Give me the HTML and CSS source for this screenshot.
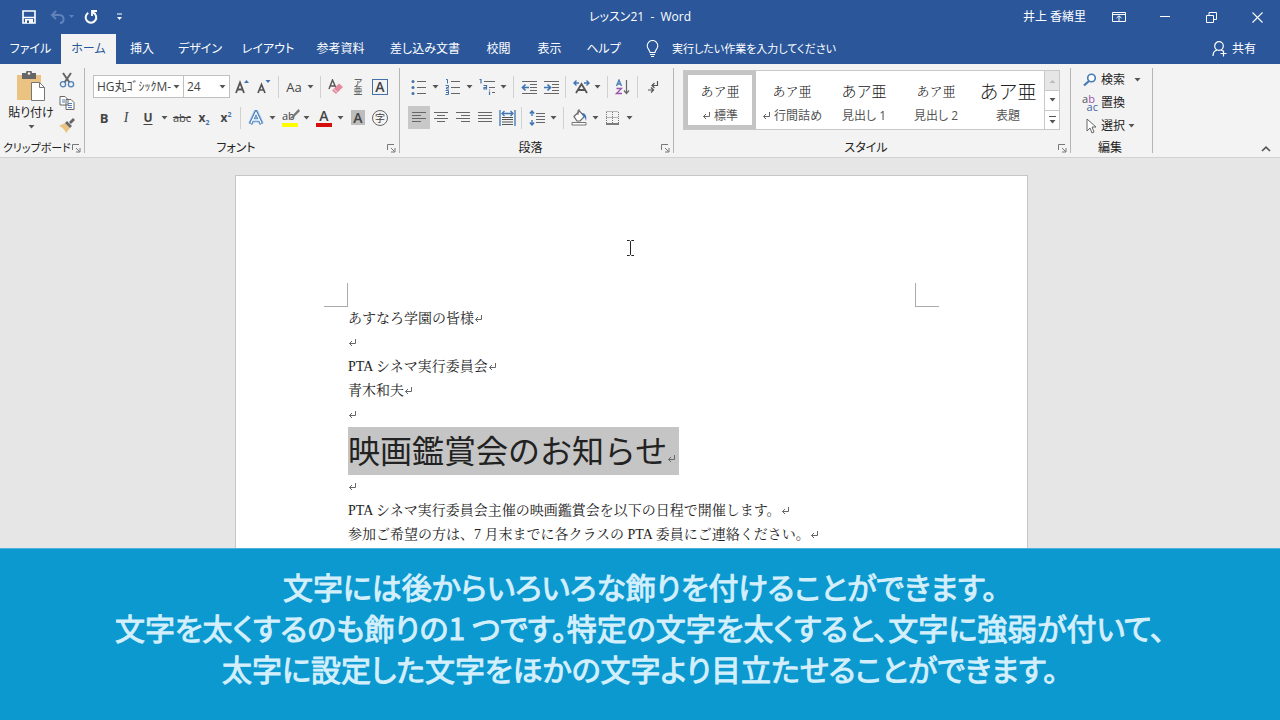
FILE: index.html
```html
<!DOCTYPE html>
<html lang="ja">
<head>
<meta charset="utf-8">
<meta name="viewport" content="width=device-width, initial-scale=1">
<title>レッスン21 - Word</title>
<link rel="stylesheet" href="styles.css">
</head>
<body>
<svg class="defs" aria-hidden="true">
  <symbol id="down" viewBox="0 0 7 4"><path d="M0.5 0h6L3.5 3.5z" fill="currentColor"/></symbol>
  <symbol id="launch" viewBox="0 0 9 9"><path d="M.5 6V.5H7M4 4l3.5 3.5M8 4v4H4" fill="none" stroke="#777"/></symbol>
  <symbol id="ret" viewBox="0 0 9 9"><path d="M7.500 1v4.500H1.500M4 3L1.500 5.500 4 8" fill="none" stroke="#666"/></symbol>
</svg>

<header class="titlebar">
  <div class="quick">
    <button class="quick-btn quick-save" aria-label="上書き保存"><svg width="14" height="14" viewBox="0 0 14 14"><path d="M1 1h12v12H1zM1 7.500h12" fill="none" stroke="#fff" stroke-width="1.600"/><path d="M3 9h8v4H3z" fill="#fff"/><path d="M5 10.500h2V13H5z" fill="#2b579a"/></svg></button>
    <button class="quick-btn quick-undo" aria-label="元に戻す"><svg width="24" height="14" viewBox="0 0 24 14"><path d="M6 1L2 5l4 4M2 5h7c6 0 6 8 1 8" fill="none" stroke="currentColor" stroke-width="2"/><path d="M19 5h5l-2.500 3z" fill="currentColor"/></svg></button>
    <button class="quick-btn" aria-label="繰り返し"><svg width="14" height="14" viewBox="0 0 14 14"><path d="M9 2.500A5.300 5.300 0 1 1 4.300 2.800" fill="none" stroke="#fff" stroke-width="2"/><path d="M8 6V1h5" fill="none" stroke="#fff" stroke-width="1.800"/></svg></button>
    <button class="quick-btn quick-more" aria-label="クイック アクセス ツール バーのカスタマイズ"><svg width="7" height="8" viewBox="0 0 7 8"><path d="M1 1h5" stroke="#fff"/><path d="M1 4h5L3.500 7z" fill="#fff"/></svg></button>
  </div>
  <h1 class="title">レッスン21 &nbsp;- &nbsp;Word</h1>
  <div class="window-controls">
    <span class="user">井上 香緒里</span>
    <button class="win-btn" aria-label="リボンの表示オプション"><svg width="14" height="12" viewBox="0 0 14 12"><path d="M.5 1.500h13v9H.5zM.5 3.500h13M7 10V5M4.500 7L7 4.800 9.500 7" fill="none" stroke="#fff"/></svg></button>
    <button class="win-btn" aria-label="最小化"><svg width="10" height="10" viewBox="0 0 10 10"><path d="M0 4.500h10" stroke="#fff"/></svg></button>
    <button class="win-btn" aria-label="元に戻す (縮小)"><svg width="11" height="11" viewBox="0 0 11 11"><path d="M.5 3.500h7v7h-7zM3 3.500v-3h7.500v7H8" fill="none" stroke="#fff"/></svg></button>
    <button class="win-btn" aria-label="閉じる"><svg width="11" height="11" viewBox="0 0 11 11"><path d="M.5.5l10 10M10.500.5l-10 10" stroke="#fff" stroke-width="1.100"/></svg></button>
  </div>
</header>

<nav class="tabbar">
  <div class="tabs">
    <button class="tab">ファイル</button>
    <button class="tab tab-active">ホーム</button>
    <button class="tab">挿入</button>
    <button class="tab">デザイン</button>
    <button class="tab">レイアウト</button>
    <button class="tab">参考資料</button>
    <button class="tab">差し込み文書</button>
    <button class="tab">校閲</button>
    <button class="tab">表示</button>
    <button class="tab">ヘルプ</button>
  </div>
  <label class="tell"><svg width="13" height="18" viewBox="0 0 13 18"><path d="M4 12.500C4 10 1.200 9 1.200 5.800a5.300 5.300 0 0 1 10.600 0C11.800 9 9 10 9 12.500zM4 14.500h5M5 16.500h3" fill="none" stroke="#fff" stroke-width="1.100"/></svg><input class="tell-input" aria-label="操作アシスト" placeholder="実行したい作業を入力してください"></label>
  <button class="share"><svg width="16" height="16" viewBox="0 0 16 16"><circle cx="7" cy="5" r="4.300" fill="none" stroke="#fff" stroke-width="1.200"/><path d="M1 15c0-4 2-5.500 4-6M9 9c1 .3 1.500.7 2 1.200M11.500 9.500v6M8.500 12.500h6" fill="none" stroke="#fff" stroke-width="1.200"/></svg>共有</button>
</nav>

<section class="ribbon">
  <div class="group group-clip">
    <div class="clip-body">
      <button class="paste"><svg width="30" height="31" viewBox="0 0 30 31"><path d="M1 4h24v25H1z" fill="#eac282"/><path d="M6 2h4a3 3 0 0 1 6 0h4v6H6z" fill="#666"/><circle cx="13" cy="2.500" r="1.300" fill="#f3f3f3"/><path d="M15.500 11.500h8l5 5v13h-13z" fill="#fff" stroke="#777"/><path d="M23.500 11.500v5h5" fill="none" stroke="#777"/></svg><span class="paste-label">貼り付け</span><svg class="arrow"><use href="#down"/></svg></button>
      <div class="clip-tools">
        <button class="tool" aria-label="切り取り"><svg width="16" height="16" viewBox="0 0 16 16"><path d="M4 1l6.500 9.500M12 1L5.500 10.500" stroke="#666" stroke-width="2"/><circle cx="4" cy="12.300" r="2.600" fill="none" stroke="#5080b8" stroke-width="1.300"/><circle cx="12" cy="12.300" r="2.600" fill="none" stroke="#5080b8" stroke-width="1.300"/></svg></button>
        <button class="tool" aria-label="コピー"><svg width="16" height="16" viewBox="0 0 16 16"><path d="M1 1.500h5l3 3V10H1zM7 4.500h5l3 3v7H7z" fill="#fff" stroke="#666"/><path d="M3 5h3M3 7h3M9 8.500h4M9 10.500h4M9 12.500h4" stroke="#5080b8"/></svg></button>
        <button class="tool" aria-label="書式のコピー/貼り付け"><svg width="16" height="15" viewBox="0 0 16 15"><path d="M0 8l6-3 5 5-4 5C6 12 3 9 0 8z" fill="#eac282"/><path d="M6 5l2-2 5 5-2 2zM10 4l4-4 2 2-4 4z" fill="#666"/></svg></button>
      </div>
    </div>
    <div class="group-foot"><span class="foot-small">クリップボード</span><button class="launch" aria-label="クリップボードの設定"><svg class="launch-icon"><use href="#launch"/></svg></button></div>
  </div>

  <div class="group group-font">
    <div class="rows">
      <div class="row">
        <label class="combo combo-font"><select class="combo-select" aria-label="フォント"><option>HG丸ｺﾞｼｯｸM-</option></select><svg class="arrow"><use href="#down"/></svg></label>
        <label class="combo combo-size"><select class="combo-select" aria-label="フォント サイズ"><option>24</option></select><svg class="arrow"><use href="#down"/></svg></label>
        <button class="tool" aria-label="フォント サイズの拡大"><svg width="16" height="16" viewBox="0 0 16 16"><path d="M2 14L6 3.500 10 14M3.500 10.500h5" fill="none" stroke="#555" stroke-width="1.800"/><path d="M10 4h5L12.500 1z" fill="#4472a8"/></svg></button>
        <button class="tool" aria-label="フォント サイズの縮小"><svg width="16" height="16" viewBox="0 0 16 16"><path d="M2 14l3.500-8.500L9 14M3.500 11h4" fill="none" stroke="#555" stroke-width="1.700"/><path d="M9.500 1h5L12 4z" fill="#4472a8"/></svg></button>
        <i class="sep"></i>
        <button class="tool tool-case">Aa</button><button class="drop" aria-label="文字種の変換"><svg class="arrow"><use href="#down"/></svg></button>
        <i class="sep"></i>
        <button class="tool" aria-label="すべての書式をクリア"><svg width="16" height="16" viewBox="0 0 16 16"><path d="M1 10l3.500-9L8 9M2.500 7h4" fill="none" stroke="#555" stroke-width="1.400"/><path d="M11 4.500L15 8l-7 7-4-3.500z" fill="#e48aa0"/><path d="M5.500 10l4 3.500" stroke="#f9dbe2"/></svg></button>
        <button class="tool tool-ruby" aria-label="ルビ">ア<br>亜</button>
        <button class="tool" aria-label="囲み線"><span class="boxed">A</span></button>
      </div>
      <div class="row">
        <button class="tool tool-bold">B</button><button class="tool tool-italic">I</button><button class="tool tool-under">U</button><button class="drop" aria-label="下線の種類"><svg class="arrow"><use href="#down"/></svg></button>
        <button class="tool tool-strike">abc</button><button class="tool tool-script">x<sub>2</sub></button><button class="tool tool-script">x<sup>2</sup></button>
        <i class="sep"></i>
        <button class="tool" aria-label="文字の効果と体裁"><svg width="16" height="16" viewBox="0 0 16 16"><path d="M2.500 14L8 2l5.500 12M5 10h6" fill="none" stroke="#a9cbed" stroke-width="5"/><path d="M2.500 14L8 2l5.500 12M5 10h6" fill="none" stroke="#4779b5" stroke-width="3.200"/><path d="M2.800 13.500L8 2.500l5.200 11M5 10h6" fill="none" stroke="#fff" stroke-width="1.300"/></svg></button><button class="drop" aria-label="効果の一覧"><svg class="arrow"><use href="#down"/></svg></button>
        <button class="tool tool-color"><span class="mark-text">ab</span><svg class="pen" width="16" height="16" viewBox="0 0 16 16"><path d="M14.500 1L8 8l-3 3 4-1 7-7z" fill="#777"/></svg><span class="swatch swatch-yellow"></span></button><button class="drop" aria-label="蛍光ペンの色"><svg class="arrow"><use href="#down"/></svg></button>
        <button class="tool tool-color"><span class="mark-letter">A</span><span class="swatch swatch-red"></span></button><button class="drop" aria-label="フォントの色"><svg class="arrow"><use href="#down"/></svg></button>
        <button class="tool" aria-label="文字の網かけ"><span class="shaded">A</span></button>
        <button class="tool" aria-label="囲い文字"><span class="circled">字</span></button>
      </div>
    </div>
    <div class="group-foot"><span>フォント</span><button class="launch" aria-label="フォントの設定"><svg class="launch-icon"><use href="#launch"/></svg></button></div>
  </div>

  <div class="group group-para">
    <div class="rows">
      <div class="row">
        <button class="tool" aria-label="箇条書き"><svg width="16" height="16" viewBox="0 0 16 16"><path d="M6 2.500h9M6 8.500h9M6 14.500h9" stroke="#666"/><g fill="#4472a8"><circle cx="2" cy="2.500" r="1.500"/><circle cx="2" cy="8.500" r="1.500"/><circle cx="2" cy="14.500" r="1.500"/></g></svg></button><button class="drop" aria-label="行頭文字"><svg class="arrow"><use href="#down"/></svg></button>
        <button class="tool" aria-label="段落番号"><svg width="16" height="16" viewBox="0 0 16 16"><path d="M6 2.500h9M6 8.500h9M6 14.500h9" stroke="#666"/><path d="M1 .5h1.500V4.500M.5 6.500h3v2h-2v1.500h2.500M.5 11.500h3v4h-3M1 13.500h2" fill="none" stroke="#4472a8"/></svg></button><button class="drop" aria-label="番号の書式"><svg class="arrow"><use href="#down"/></svg></button>
        <button class="tool" aria-label="アウトライン"><svg width="16" height="16" viewBox="0 0 16 16"><path d="M5 2.500h11M10 8.500h6M13 13.500h3" stroke="#666"/><path d="M.5.500H2V4.500M4.500 6.500h3V10H5V8.500H7M10.500 12.500V16M10.500 10.500v1" fill="none" stroke="#4472a8" stroke-width="1.200"/></svg></button><button class="drop" aria-label="リスト ライブラリ"><svg class="arrow"><use href="#down"/></svg></button>
        <i class="sep"></i>
        <button class="tool" aria-label="インデントを減らす"><svg width="17" height="16" viewBox="0 0 17 16"><path d="M1 2.500h15M9 5.500h7M9 8.500h7M9 11.500h7M1 14.500h15" stroke="#666"/><path d="M8 8.500H2M4.500 5.500L1.500 8.500l3 3" fill="none" stroke="#3e75b5" stroke-width="1.700"/></svg></button>
        <button class="tool" aria-label="インデントを増やす"><svg width="17" height="16" viewBox="0 0 17 16"><path d="M1 2.500h15M9 5.500h7M9 8.500h7M9 11.500h7M1 14.500h15" stroke="#666"/><path d="M1 8.500h6M4.500 5.500l3 3-3 3" fill="none" stroke="#3e75b5" stroke-width="1.700"/></svg></button>
        <i class="sep"></i>
        <button class="tool" aria-label="拡張書式"><svg width="17" height="16" viewBox="0 0 17 16"><path d="M3 14l5.500-9L14 14M5 11h7" fill="none" stroke="#555" stroke-width="1.800"/><path d="M1.500 4H6M3.500 1.500L1 4l2.500 2.500M15.500 4H11M13.500 1.500L16 4l-2.500 2.500" fill="none" stroke="#3e75b5" stroke-width="1.400"/></svg></button><button class="drop" aria-label="拡張書式の一覧"><svg class="arrow"><use href="#down"/></svg></button>
        <i class="sep"></i>
        <button class="tool" aria-label="並べ替え"><svg width="16" height="16" viewBox="0 0 16 16"><path d="M1.500 7L4 1l2.500 6M2.500 5h3" fill="none" stroke="#4779b5" stroke-width="1.300"/><path d="M1.500 9.500h5l-5 5h5.500" fill="none" stroke="#9a55b0" stroke-width="1.300"/><path d="M11.500 1v13M9 11.500l2.500 3 2.500-3" fill="none" stroke="#666" stroke-width="1.200"/></svg></button>
        <i class="sep"></i>
        <button class="tool" aria-label="編集記号の表示/非表示"><svg width="12" height="14" viewBox="0 0 12 14"><path d="M10.500 1v4.500H5M7.500 3L5 5.500 7.500 8M1 10h5M4 7.500L6.500 10 4 12.500" fill="none" stroke="#555" stroke-width="1.200"/></svg></button>
      </div>
      <div class="row">
        <button class="tool tool-on" aria-label="左揃え"><svg width="16" height="14" viewBox="0 0 16 14"><path d="M1 1.500h14M1 4.500h9M1 7.500h14M1 10.500h9" stroke="#666"/></svg></button>
        <button class="tool" aria-label="中央揃え"><svg width="16" height="14" viewBox="0 0 16 14"><path d="M1 1.500h14M4 4.500h8M1 7.500h14M4 10.500h8" stroke="#666"/></svg></button>
        <button class="tool" aria-label="右揃え"><svg width="16" height="14" viewBox="0 0 16 14"><path d="M1 1.500h14M6 4.500h9M1 7.500h14M6 10.500h9" stroke="#666"/></svg></button>
        <button class="tool" aria-label="両端揃え"><svg width="16" height="14" viewBox="0 0 16 14"><path d="M1 1.500h14M1 4.500h14M1 7.500h14M1 10.500h14" stroke="#666"/></svg></button>
        <button class="tool" aria-label="均等割り付け"><svg width="17" height="16" viewBox="0 0 17 16"><path d="M3 7.500h11M3 9.500h11M3 12h11M3 14.500h11" stroke="#555"/><path d="M1 0v16M16 0v16M3 3.500h11M5.500 1L3 3.500 5.500 6M11.500 1L14 3.500 11.500 6" fill="none" stroke="#3e75b5" stroke-width="1.300"/></svg></button>
        <i class="sep"></i>
        <button class="tool" aria-label="行と段落の間隔"><svg width="16" height="16" viewBox="0 0 16 16"><path d="M7 3.500h9M7 6.500h9M7 9.500h9M7 12.500h9" stroke="#666"/><path d="M3 1v5M3 10v5M.8 3.500L3 1l2.200 2.500M.8 12.500L3 15l2.200-2.500" fill="none" stroke="#3e75b5" stroke-width="1.400"/></svg></button><button class="drop" aria-label="間隔の一覧"><svg class="arrow"><use href="#down"/></svg></button>
        <i class="sep"></i>
        <button class="tool" aria-label="塗りつぶし"><svg width="17" height="17" viewBox="0 0 17 17"><path d="M3 7.500L8.500 2l5 5.500L9 12H6z" fill="#fff" stroke="#666" stroke-width="1.200"/><path d="M7 6V1h2" fill="none" stroke="#666"/><path d="M11 4c4 0 5 4 4 8-1-3-1-4-3-5z" fill="#3e75b5"/><path d="M1 13.500h14v2.500H1z" fill="#fff" stroke="#777"/></svg></button><button class="drop" aria-label="塗りつぶしの色"><svg class="arrow"><use href="#down"/></svg></button>
        <button class="tool" aria-label="罫線"><svg width="14" height="14" viewBox="0 0 14 14"><path d="M.5 12V.5M6.500 12V.5M12.500 12V.5M.5.5h12M.5 6.500h12" stroke="#777" stroke-dasharray="1 1" fill="none"/><path d="M0 13h13" stroke="#555" stroke-width="1.500"/></svg></button><button class="drop" aria-label="罫線の種類"><svg class="arrow"><use href="#down"/></svg></button>
      </div>
    </div>
    <div class="group-foot"><span>段落</span><button class="launch" aria-label="段落の設定"><svg class="launch-icon"><use href="#launch"/></svg></button></div>
  </div>

  <div class="group group-styles">
    <div class="gallery">
      <button class="style style-on"><span class="sample">あア亜</span><span class="style-name"><svg class="ret"><use href="#ret"/></svg> 標準</span></button>
      <button class="style"><span class="sample">あア亜</span><span class="style-name"><svg class="ret"><use href="#ret"/></svg> 行間詰め</span></button>
      <button class="style"><span class="sample sample-mid">あア亜</span><span class="style-name">見出し 1</span></button>
      <button class="style"><span class="sample">あア亜</span><span class="style-name">見出し 2</span></button>
      <button class="style"><span class="sample sample-big">あア亜</span><span class="style-name">表題</span></button>
      <div class="gallery-nav">
        <button class="nav-btn nav-off" aria-label="前の行"><svg width="7" height="4" viewBox="0 0 7 4"><path d="M.5 4h6l-3-3z" fill="#bbb"/></svg></button>
        <button class="nav-btn" aria-label="次の行"><svg class="arrow"><use href="#down"/></svg></button>
        <button class="nav-btn" aria-label="その他"><svg width="7" height="8" viewBox="0 0 7 8"><path d="M0 .5h7" stroke="#555"/><path d="M.5 4h6l-3 3.500z" fill="#555"/></svg></button>
      </div>
    </div>
    <div class="group-foot"><span>スタイル</span><button class="launch" aria-label="スタイルの設定"><svg class="launch-icon"><use href="#launch"/></svg></button></div>
  </div>

  <div class="group group-edit">
    <div class="edit-list">
      <button class="edit"><svg width="16" height="16" viewBox="0 0 16 16"><circle cx="9.500" cy="6" r="3.800" fill="#fff" stroke="#4779b5" stroke-width="1.600"/><path d="M7 9l-5 4.500" stroke="#4779b5" stroke-width="2.200"/></svg>検索<svg class="arrow arrow-far"><use href="#down"/></svg></button>
      <button class="edit"><span class="replace" aria-hidden="true"><span>a<b>b</b></span><span class="replace-to">ac</span></span>置換</button>
      <button class="edit"><svg width="16" height="16" viewBox="0 0 16 16"><path d="M5 1v12l3-3 2 5 2-1-2-5h4z" fill="#fff" stroke="#666"/></svg>選択<svg class="arrow"><use href="#down"/></svg></button>
    </div>
    <div class="group-foot"><span>編集</span></div>
  </div>
  <button class="collapse" aria-label="リボンを折りたたむ"><svg width="10" height="6" viewBox="0 0 10 6"><path d="M1 5l4-3.800L9 5" fill="none" stroke="#555" stroke-width="1.700"/></svg></button>
</section>

<main class="workspace">
  <article class="page">
    <div class="marks"><i class="mark mark-left"></i><i class="mark mark-right"></i></div>
    <div class="text">
      <p>あすなろ学園の皆様<svg class="ret"><use href="#ret"/></svg></p>
      <p><svg class="ret"><use href="#ret"/></svg></p>
      <p>PTA シネマ実行委員会<svg class="ret"><use href="#ret"/></svg></p>
      <p>青木和夫<svg class="ret"><use href="#ret"/></svg></p>
      <p><svg class="ret"><use href="#ret"/></svg></p>
      <h2 class="headline">映画鑑賞会のお知らせ<svg class="ret"><use href="#ret"/></svg></h2>
      <p><svg class="ret"><use href="#ret"/></svg></p>
      <p>PTA シネマ実行委員会主催の映画鑑賞会を以下の日程で開催します。<svg class="ret"><use href="#ret"/></svg></p>
      <p>参加ご希望の方は、7 月末までに各クラスの PTA 委員にご連絡ください。<svg class="ret"><use href="#ret"/></svg></p>
    </div>
    <svg class="ibeam" width="9" height="16" viewBox="0 0 9 16"><path d="M1 .5h2.500l1 1 1-1H8M4.500 1.500v13M1 15.500h2.500l1-1 1 1H8" fill="none" stroke="#222"/></svg>
  </article>
</main>

<footer class="caption">
  <p>文字には後からいろいろな飾りを付けることができます。</p>
  <p>文字を太くするのも飾りの1 つです。特定の文字を太くすると、文字に強弱が付いて、</p>
  <p>太字に設定した文字をほかの文字より目立たせることができます。</p>
</footer>
</body>
</html>
```
FILE: styles.css
```css
* { box-sizing: border-box; }

body {
  margin: 0;
  height: 100vh;
  display: flex;
  flex-direction: column;
  overflow: hidden;
  font: 12px/16px "Open Sans", "Noto Sans CJK JP", sans-serif;
  font-feature-settings: "palt";
  color: #333;
  background: #e6e6e6;
}

button, input, select {
  font: inherit;
  font-feature-settings: inherit;
  color: inherit;
  margin: 0;
  padding: 0;
  border: 0;
  background: none;
  white-space: nowrap;
}

button { display: flex; align-items: center; justify-content: center; }
svg { flex: none; }
p, h1, h2 { margin: 0; font-weight: 400; }

.defs { display: none; }
.arrow { width: 7px; height: 4px; color: #555; }
.ret { width: 9px; height: 9px; }

/* Title bar */
.titlebar {
  flex: none;
  height: 34px;
  display: grid;
  grid-template-columns: 1fr auto 1fr;
  align-items: center;
  color: #fff;
  background: #2b579a;
}
.quick { display: flex; gap: 10px; padding: 0 22px; }
.quick-save { margin-right: 4px; }
.quick-undo { color: #5f83ba; }
.quick-more { padding-left: 8px; }
.title { font-size: 12px; line-height: 32px; }
.window-controls { display: flex; justify-content: flex-end; align-items: center; height: 32px; }
.user { padding-right: 10px; }
.win-btn { width: 46px; height: 30px; }

/* Tabs */
.tabbar {
  flex: none;
  height: 30px;
  display: flex;
  align-items: center;
  color: #fff;
  background: #2b579a;
}
.tabs {
  height: 30px;
  display: grid;
  grid-template-columns: 61px 55px 52px 64px 72px 73px 96px 51px 51px 57px;
}
.tab { height: 30px; }
.tab-active { color: #2b579a; background: #f3f3f3; }
.tell { flex: 1; display: flex; align-items: center; gap: 13px; padding-left: 14px; }
.tell-input { flex: 1; outline: 0; font-size: 11px; }
.tell-input::placeholder { color: #fff; opacity: 1; }
.share { gap: 4px; padding: 0 24px; }

/* Ribbon */
.ribbon {
  flex: none;
  display: flex;
  height: 94px;
  background: #f3f3f3;
  border-bottom: 1px solid #d2d2d2;
}
.group {
  flex: none;
  display: flex;
  flex-direction: column;
  justify-content: space-between;
  margin: 4px 0;
  border-right: 1px solid #b5b5b5;
}
.group-clip { width: 85px; }
.group-font { width: 315px; }
.group-para { width: 274px; }
.group-styles { width: 397px; }
.group-edit { width: 82px; }
.group-foot { display: flex; align-items: center; padding: 0 3px 0 0; height: 10px; }
.group-foot span { flex: 1; text-align: center; white-space: nowrap; color: #222; }
.group-foot .foot-small { font-size: 11px; padding-left: 3px; text-align: left; }
.launch-icon { width: 9px; height: 9px; }

.clip-body { display: flex; gap: 2px; padding-left: 8px; }
.paste { width: 46px; flex-direction: column; justify-content: flex-start; padding-top: 3px; color: #222; }
.paste-label { padding: 3px 0 4px; }
.clip-tools { display: flex; flex-direction: column; }

.tool { flex: none; width: 22px; height: 23px; color: #444; }
.drop { flex: none; width: 12px; height: 22px; justify-content: flex-start; padding-left: 2px; }
.sep { flex: none; width: 8px; height: 22px; border-left: 1px solid #d0d0d0; margin-left: 3px; margin-right: -3px; }
.rows { display: flex; flex-direction: column; gap: 8px; padding: 7px 0 0 8px; }
.row { display: flex; align-items: center; height: 23px; }

.combo {
  display: flex;
  align-items: center;
  height: 23px;
  padding: 0 3px;
  background: #fff;
  border: 1px solid #c0c0c0;
}
.combo-select { flex: 1; min-width: 0; appearance: none; outline: 0; color: #444; }
.combo-font { width: 91px; }
.combo-size { width: 47px; margin: 0 1px 0 -1px; }

.tool-case { font-size: 13px; }
.tool-ruby { display: block; font-size: 9px; line-height: 8px; text-align: center; }
.boxed { width: 16px; border: 1px solid #4472a8; font-size: 14px; font-weight: 600; line-height: 14px; }
.shaded { width: 14px; background: #bdbdbd; font-size: 14px; font-weight: 600; line-height: 15px; }
.circled { width: 16px; border: 1px solid #666; border-radius: 8px; font-size: 10px; line-height: 14px; }
.tool-bold { font-weight: 700; font-size: 13px; }
.tool-italic { font: italic 14px "Liberation Serif", serif; }
.tool-under { font-weight: 700; text-decoration: underline; text-underline-offset: 2px; }
.tool-strike { font-size: 11px; text-decoration: line-through; }
.tool-script { display: block; font-weight: 700; font-size: 12px; line-height: 16px; text-align: center; }
.tool-script sub, .tool-script sup { font-size: 7px; line-height: 0; color: #4472a8; }
.tool-color { position: relative; flex-direction: column; }
.mark-text { align-self: flex-start; padding-left: 3px; font-size: 11px; line-height: 14px; }
.mark-letter { font-size: 14px; line-height: 14px; font-weight: 600; }
.pen { position: absolute; left: 5px; top: 2px; }
.swatch { width: 16px; height: 4px; }
.swatch-yellow { background: #ffff00; }
.swatch-red { background: #d40d0d; }
.tool-on { background: #c8c8c8; }

/* Style gallery */
.gallery {
  display: flex;
  height: 60px;
  margin: 2px 10px 0 9px;
  background: #fff;
  border: 1px solid #c8c8c8;
}
.style { flex: 1; flex-direction: column; justify-content: flex-start; padding-top: 7px; border: 4px solid transparent; }
.style-on { border-color: #c4c4c4; }
.sample { font: 300 13px/18px "Noto Serif CJK JP", "Noto Sans CJK JP", serif; font-feature-settings: normal; color: #222; }
.sample-mid { font: 300 15px/18px "Noto Sans CJK JP", sans-serif; }
.sample-big { font: 300 19px/18px "Noto Sans CJK JP", sans-serif; }
.style-name { line-height: 16px; padding-top: 8px; color: #555; }
.gallery-nav { flex: none; width: 15px; display: grid; grid-template-rows: 1fr 1fr 1fr; border-left: 1px solid #c8c8c8; }
.nav-btn + .nav-btn { border-top: 1px solid #c8c8c8; }
.nav-off { background: #e6e6e6; }

.edit-list { padding: 0 0 0 11px; }
.edit { height: 23px; gap: 3px; color: #222; }
.arrow-far { margin-left: 6px; }
.replace { width: 16px; display: flex; flex-direction: column; font-size: 11px; line-height: 8px; color: #555; text-align: left; }
.replace b { font-weight: 400; color: #9a55b0; }
.replace-to { text-align: right; color: #3e65a5; }
.collapse { margin: auto 9px 5px auto; }

/* Document */
.workspace {
  flex: 1;
  min-height: 0;
  display: flex;
  justify-content: center;
  padding: 17px 17px 0 0;
  overflow: hidden;
}
.page {
  position: relative;
  width: 793px;
  background: #fff;
  border: 1px solid #c6c6c6;
  border-bottom: 0;
}
.marks { display: flex; justify-content: space-between; padding: 107px 88px 0; }
.mark { width: 24px; height: 24px; border-bottom: 1px solid #aaa; }
.mark-left { border-right: 1px solid #aaa; }
.mark-right { border-left: 1px solid #aaa; }
.text {
  padding: 0 112px;
  font: 300 14px/24px "Liberation Serif", "Noto Serif CJK JP", "Noto Sans CJK JP", serif;
  font-feature-settings: normal;
  color: #222;
  white-space: nowrap;
}
.headline {
  width: max-content;
  padding: 0 3px 4px 0;
  font: 400 32px/44px "Noto Sans CJK JP", sans-serif;
  background: #c5c5c5;
}
.ibeam { position: absolute; left: 390px; top: 64px; }

/* Caption */
.caption {
  flex: none;
  padding: 17px 20px 31px;
  border-top: 1px solid #4fb0d8;
  background: #0c99d0;
  color: #d3effc;
  font-family: "Noto Sans CJK JP", sans-serif;
  font-size: 30px;
  font-weight: 400;
  line-height: 41px;
  text-align: center;
  -webkit-text-stroke: 1px #d3effc;
}
```
